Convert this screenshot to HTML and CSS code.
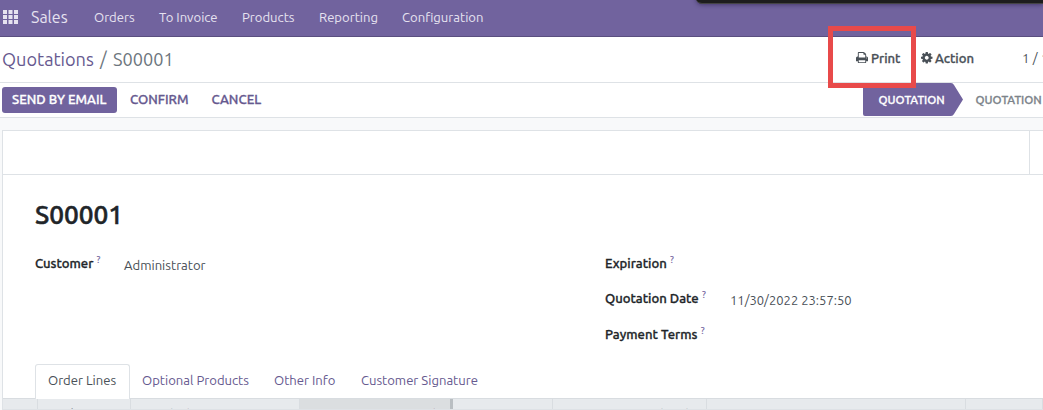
FILE: index.html
```
<!DOCTYPE html>
<html lang="en">
<head>
<meta charset="utf-8">
<title>S00001</title>
<link rel="stylesheet" href="styles.css">
</head>
<body>
<nav class="navbar">
  <svg class="apps" viewBox="0 0 15 14" width="15" height="14"><path d="M0 0h4v4H0zM5.5 0h4v4h-4zM11 0h4v4h-4zM0 5h4v4H0zM5.5 5h4v4h-4zM11 5h4v4h-4zM0 10h4v4H0zM5.5 10h4v4h-4zM11 10h4v4h-4z"/></svg>
  <span class="brand">Sales</span>
  <span class="menu orders">Orders</span>
  <span class="menu invoice">To Invoice</span>
  <span class="menu products">Products</span>
  <span class="menu reporting">Reporting</span>
  <span class="menu config">Configuration</span>
</nav>
<div class="overlay-bar"></div>
<header class="control">
  <div class="crumbs"><span class="crumb-link">Quotations</span><span class="slash">/</span><span class="crumb-now">S00001</span></div>
  <div class="actions">
    <span class="action print"><svg class="icon" viewBox="0 0 1664 1664" width="12" height="12"><path d="M384 1408h896v-256H384v256zm0-640h896V384h-160q-40 0-68-28t-28-68V128H384v640zm1152 64q0-26-19-45t-45-19-45 19-19 45 19 45 45 19 45-19 19-45zm128 0v416q0 13-9.500 22.500t-22.500 9.500h-224v160q0 40-28 68t-68 28H352q-40 0-68-28t-28-68v-160H32q-13 0-22.500-9.500T0 1248V832q0-79 56.500-135.500T192 640h64V96q0-40 28-68t68-28h672q40 0 88 20t76 48l152 152q28 28 48 76t20 88v256h64q79 0 135.500 56.500T1664 832z"/></svg><b class="label">Print</b></span>
    <span class="action gear"><svg class="icon" viewBox="0 0 1536 1536" width="11.500" height="11.500"><path d="M1024 768q0-106-75-181t-181-75-181 75-75 181 75 181 181 75 181-75 75-181zm512-109v222q0 12-8 23t-20 13l-185 28q-19 54-39 91 35 50 107 138 10 12 10 25t-9 23q-27 37-99 108t-94 71q-12 0-26-9l-138-108q-44 23-91 38-16 136-29 186-7 28-36 28H657q-14 0-24.500-8.500T621 1506l-28-184q-49-16-90-37l-141 107q-10 9-25 9-14 0-25-11-126-114-165-168-7-10-7-23 0-12 8-23 15-21 51-66.500t54-70.500q-27-50-41-99L29 913q-13-2-21-12.500T0 877V655q0-12 8-23t19-13l186-28q14-46 39-92-40-57-107-138-10-12-10-24 0-10 9-23 26-36 98.500-107.500T337 135q13 0 26 10l138 107q44-23 91-38 16-136 29-186 7-28 36-28h222q14 0 24.500 8.500T915 30l28 184q49 16 90 37l142-107q9-9 24-9 13 0 25 10 129 119 165 170 7 8 7 22 0 12-8 23-15 21-51 66.500t-54 70.500q26 50 41 98l183 28q13 2 21 12.500t8 23.500z"/></svg><b class="label">Action</b></span>
    <span class="pager">1 / 1</span>
  </div>
</header>
<div class="callout"></div>
<section class="statusbar">
  <div class="buttons">
    <span class="btn primary">SEND BY EMAIL</span>
    <span class="btn confirm">CONFIRM</span>
    <span class="btn cancel">CANCEL</span>
  </div>
  <div class="stages">
    <div class="stage current"><svg class="arrow" width="101" height="33" viewBox="0 0 101 33"><path d="M0 0H88Q90 0 91 2L100 16.500 91 31Q90 33 88 33H2Q0 33 0 31Z"/></svg><span class="stage-name">QUOTATION</span></div>
    <span class="stage next">QUOTATION</span>
  </div>
</section>
<main class="canvas">
  <article class="sheet">
    <div class="button-box"><div class="box-main"></div></div>
    <div class="form">
      <h1 class="title">S00001</h1>
      <div class="groups">
        <div class="group">
          <div class="row"><div class="name"><b>Customer</b><sup>?</sup></div><span class="value">Administrator</span></div>
        </div>
        <div class="group right">
          <div class="row"><div class="name"><b>Expiration</b><sup>?</sup></div></div>
          <div class="row"><div class="name"><b>Quotation Date</b><sup>?</sup></div><span class="value">11/30/2022 23:57:50</span></div>
          <div class="row"><div class="name"><b>Payment Terms</b><sup>?</sup></div></div>
        </div>
      </div>
      <div class="tabs">
        <span class="tab active">Order Lines</span>
        <span class="tab optional">Optional Products</span>
        <span class="tab other">Other Info</span>
        <span class="tab">Customer Signature</span>
      </div>
    </div>
    <div class="thead">
      <div class="th c0"></div>
      <div class="th c1">Product</div>
      <div class="th c2">Description</div>
      <div class="th c3">Quantity</div>
      <div class="th c4"></div>
      <div class="th c5">Unit Price</div>
      <div class="th c6"></div>
      <div class="th c7"></div>
    </div>
  </article>
</main>
</body>
</html>
```
FILE: styles.css
```
* { box-sizing: border-box; }
body { margin: 0; width: 1043px; height: 410px; overflow: hidden; background: #fff; font: 13.100px/20px Ubuntu, "Noto Sans", sans-serif; color: #495057; }
span, b { white-space: nowrap; }
b { font-weight: 500; }
b, .btn, .stage, .title, .th { -webkit-text-stroke: .3px currentColor; }
.navbar { height: 37px; background: #71639e; border-bottom: 1px solid #5a4f7f; display: flex; align-items: center; padding: 0 0 2px 3px; color: #e6e2f0; }
.apps { fill: #e6e2f0; margin-right: 13px; }
.brand { font-size: 16px; width: 63px; }
.orders { width: 65px; }
.invoice { width: 83px; }
.products { width: 77px; }
.reporting { width: 83px; }
.overlay-bar { position: absolute; left: 696px; top: -8px; width: 347px; height: 12px; border-radius: 7px 0 0 7px; background: #1d1d1d; border-bottom: 1px solid #444; box-shadow: 0 1px 4px rgba(30, 20, 60, .5); }
.control { height: 46px; border-bottom: 1px solid #dee2e6; display: flex; justify-content: space-between; padding: 0 0 2px 2px; align-items: center; }
.crumbs { font-size: 18.150px; display: flex; color: #6c757d; }
.crumb-link { color: #66598f; width: 98px; }
.slash { width: 13px; }
.actions { display: flex; width: 187px; margin-top: -1px; overflow: hidden; }
.action { display: flex; align-items: center; flex: none; }
.print { width: 65px; }
.gear { width: 101px; }
.icon { fill: #495057; margin-right: 3px; }
.gear .icon { margin-right: 2.500px; }
.pager { letter-spacing: .2px; color: #495057; }
.callout { position: absolute; left: 828px; top: 26px; width: 88px; height: 62px; border: 5px solid #e84a4a; z-index: 2; }
.statusbar { height: 35px; border-bottom: 1px solid #dee2e6; display: flex; justify-content: space-between; }
.buttons { display: flex; align-items: center; padding-left: 2px; color: #66598f; font-weight: 500; font-size: 13.150px; }
.btn { line-height: 25px; height: 26px; }
.primary { width: 115px; background: #71639e; color: #fff; border-radius: 3px; padding-left: 10px; margin-right: 13px; }
.confirm { width: 81.500px; }
.stages { display: flex; width: 180px; font-size: 11.600px; font-weight: 500; line-height: 34px; overflow: hidden; }
.current { display: grid; color: #fff; width: 112.500px; flex: none; }
.arrow, .stage-name { grid-area: 1 / 1; }
.arrow { fill: #71639e; }
.stage-name { padding-left: 15.500px; }
.next { color: #7c838a; }
.canvas { background: #f8f9fa; padding: 12px 0 0 2px; height: 292px; }
.sheet { background: #fff; border: 1px solid #dee2e6; border-right: 0; height: 280px; overflow: hidden; }
.button-box { height: 44px; border-bottom: 1px solid #dee2e6; }
.box-main { width: 1027px; height: 43px; border-right: 1px solid #dee2e6; }
.form { padding: 23px 0 0 32px; height: 223px; }
.title { margin: 0; font-size: 26.200px; line-height: 34px; font-weight: 500; color: #212529; -webkit-text-stroke-width: .5px; }
.groups { display: flex; margin-top: 21px; height: 111px; }
.group { width: 570px; flex: none; }
.group.right { width: 438px; }
.row { display: flex; height: 35.400px; }
.name { color: #212529; display: flex; width: 89px; }
.right .name { width: 125px; }
sup { font-size: 9px; line-height: 14px; color: #71639e; margin-left: 3.500px; -webkit-text-stroke: .2px currentColor; }
.value { padding-top: 2px; }
.right .value { font-size: 13px; }
.tabs { display: flex; height: 35px; line-height: 33px; color: #66598f; }
.active { width: 95px; border: 1px solid #dee2e6; border-bottom: 0; border-radius: 3px 3px 0 0; background: #fff; color: #495057; padding-left: 12px; margin-right: 12px; line-height: 31px; }
.optional { width: 132px; }
.other { width: 87px; }
.thead { display: flex; height: 13px; background: #e7eaed; border-top: 1px solid #d8dce0; overflow: hidden; font-weight: 500; color: #343a40; }
.th { border-right: 1px solid #d9dde1; padding-top: 5px; flex: none; }
.c0 { width: 35px; }
.c1 { width: 93px; padding-left: 7px; }
.c2 { width: 169px; padding-left: 5px; }
.c3 { width: 153px; background: #dbdee0; border-right: 3px solid #b9bec2; text-align: right; padding-right: 2px; }
.c4 { width: 100px; }
.c5 { width: 154px; text-align: right; padding-right: 4px; }
.c6 { width: 259px; }
.c7 { width: 77px; }
```
